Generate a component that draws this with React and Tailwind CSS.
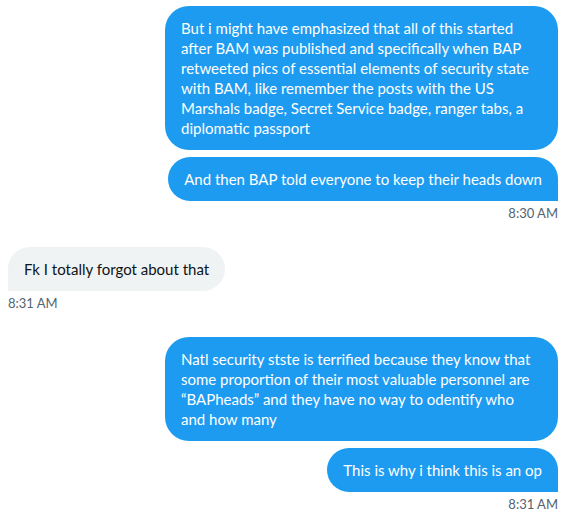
import React from "react";

const font = { fontFamily: "Lato, 'Liberation Sans', sans-serif" };

function Sent({ children, last, className = "" }) {
    return (
        <div
            className={`bg-[#1d9bf0] text-white text-[15px] leading-5 px-4 py-3 rounded-[24px] ${last ? "rounded-br-none" : ""} ${className}`}
        >
            {children}
        </div>
    );
}

function Stamp({ children, left }) {
    return (
        <div className={`mt-1 text-[13px] leading-4 text-[#536471] ${left ? "self-start" : "self-end"}`}>
            {children}
        </div>
    );
}

export default function App() {
    return (
        <div className="w-[565px] h-[520px] bg-white overflow-hidden pt-[6px] pl-2 pr-[7px]" style={font}>
            <div className="flex flex-col items-end">
                <Sent className="w-[393px]">
                    But i might have emphasized that all of this started after BAM was published and
                    specifically when BAP retweeted pics of essential elements of security state with BAM,
                    like remember the posts with the US Marshals badge, Secret Service badge, ranger tabs,
                    a diplomatic passport
                </Sent>
                <Sent last className="mt-[7px]">
                    And then BAP told everyone to keep their heads down
                </Sent>
                <Stamp>8:30 AM</Stamp>
            </div>

            <div className="mt-[26px] flex flex-col items-start">
                <div className="bg-[#eff3f4] text-[#0f1419] text-[15px] leading-5 px-4 py-3 rounded-[24px] rounded-bl-none">
                    Fk I totally forgot about that
                </div>
                <Stamp left>8:31 AM</Stamp>
            </div>

            <div className="mt-[26px] flex flex-col items-end">
                <Sent className="w-[393px]">
                    Natl security stste is terrified because they know that some proportion of their most
                    valuable personnel are “BAPheads” and they have no way to odentify who and how many
                </Sent>
                <Sent last className="mt-[7px]">
                    This is why i think this is an op
                </Sent>
                <Stamp>8:31 AM</Stamp>
            </div>
        </div>
    );
}
